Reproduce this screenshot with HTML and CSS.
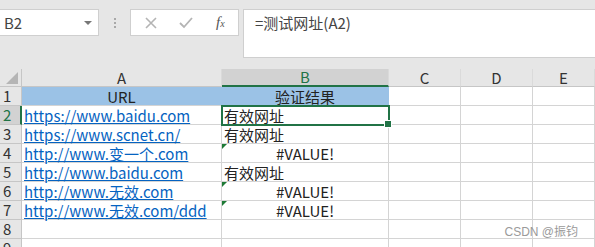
FILE: index.html
```html
<!DOCTYPE html>
<html lang="zh-CN">
<head>
  <meta charset="UTF-8" />
  <title>Excel - 验证结果</title>
  <link rel="stylesheet" href="styles.css">
</head>
<body>
  <div class="formula-bar">
    <div class="name-box">
      <span>B2</span>
      <span class="drop"></span>
    </div>
    <div class="grip">
      <i></i><i></i><i></i>
    </div>
    <div class="fx-buttons">
      <svg width="14" height="14" viewBox="0 0 14 14"><path d="M2 2 L12 12 M12 2 L2 12" stroke="#b4b4b4" stroke-width="1.6" fill="none"/></svg>
      <svg width="16" height="14" viewBox="0 0 16 14"><path d="M2 7 L6 11 L14 2" stroke="#b4b4b4" stroke-width="1.8" fill="none"/></svg>
      <span class="fx">f<sub>x</sub></span>
    </div>
    <div class="formula-input">=测试网址(A2)</div>
  </div>

  <div class="sheet">
    <div class="corner"><span class="corner-tri"></span></div>
    <div class="col-head">A</div>
    <div class="col-head active">B</div>
    <div class="col-head">C</div>
    <div class="col-head">D</div>
    <div class="col-head">E</div>

    <div class="row-head">1</div>
    <div class="cell fill center">URL</div>
    <div class="cell fill center">验证结果</div>
    <div class="cell"></div>
    <div class="cell"></div>
    <div class="cell"></div>

    <div class="row-head active">2</div>
    <div class="cell"><a href="#">https://www.baidu.com</a></div>
    <div class="cell selected">有效网址<span class="handle"></span></div>
    <div class="cell"></div>
    <div class="cell"></div>
    <div class="cell"></div>

    <div class="row-head">3</div>
    <div class="cell"><a href="#">https://www.scnet.cn/</a></div>
    <div class="cell">有效网址</div>
    <div class="cell"></div>
    <div class="cell"></div>
    <div class="cell"></div>

    <div class="row-head">4</div>
    <div class="cell"><a href="#">http://www.变一个.com</a></div>
    <div class="cell center err">#VALUE!</div>
    <div class="cell"></div>
    <div class="cell"></div>
    <div class="cell"></div>

    <div class="row-head">5</div>
    <div class="cell"><a href="#">http://www.baidu.com</a></div>
    <div class="cell">有效网址</div>
    <div class="cell"></div>
    <div class="cell"></div>
    <div class="cell"></div>

    <div class="row-head">6</div>
    <div class="cell"><a href="#">http://www.无效.com</a></div>
    <div class="cell center err">#VALUE!</div>
    <div class="cell"></div>
    <div class="cell"></div>
    <div class="cell"></div>

    <div class="row-head">7</div>
    <div class="cell"><a href="#">http://www.无效.com/ddd</a></div>
    <div class="cell center err">#VALUE!</div>
    <div class="cell"></div>
    <div class="cell"></div>
    <div class="cell"></div>

    <div class="row-head">8</div>
    <div class="cell"></div>
    <div class="cell"></div>
    <div class="cell"></div>
    <div class="cell"></div>
    <div class="cell"></div>

    <div class="row-head">9</div>
    <div class="cell"></div>
    <div class="cell"></div>
    <div class="cell"></div>
    <div class="cell"></div>
    <div class="cell"></div>
  </div>

  <div class="watermark">CSDN @振钧</div>
</body>
</html>
```

FILE: styles.css
```css
:root {
  --toolbar: #e6e6e6;
  --grid: #d4d4d4;
  --head-line: #c6c6c6;
  --green: #217346;
  --fill: #9bc2e6;
  --link: #0563c1;
  --text: #222;
}

* {
  box-sizing: border-box;
  margin: 0;
  padding: 0;
}

body {
  width: 595px;
  height: 247px;
  overflow: hidden;
  background: #fff;
  font-family: "Noto Sans CJK SC", "Noto Sans", sans-serif;
  color: var(--text);
  position: relative;
}

.formula-bar {
  background: var(--toolbar);
  height: 69px;
  padding-top: 9px;
  display: flex;
  align-items: flex-start;
}

.name-box {
  width: 99px;
  height: 27px;
  background: #fff;
  border: 1px solid #cfcfcf;
  border-left: none;
  display: flex;
  align-items: center;
  justify-content: space-between;
  padding: 0 6px 0 4px;
  font-size: 15px;
  color: #444;
}

.name-box .drop {
  width: 0;
  height: 0;
  border-left: 4px solid transparent;
  border-right: 4px solid transparent;
  border-top: 4px solid #777;
}

.grip {
  width: 31px;
  height: 27px;
  display: flex;
  flex-direction: column;
  align-items: center;
  justify-content: center;
  gap: 2px;
}

.grip i {
  width: 2px;
  height: 2px;
  background: #a8a8a8;
}

.fx-buttons {
  width: 109px;
  height: 27px;
  background: #fff;
  border: 1px solid #cfcfcf;
  display: flex;
  align-items: center;
  padding-left: 13px;
  gap: 20px;
}

.fx {
  font-family: "Liberation Serif", serif;
  font-style: italic;
  font-size: 15px;
  color: #555;
  margin-left: 2px;
}

.fx sub {
  font-size: 10px;
  vertical-align: 0;
}

.formula-input {
  flex: 1;
  margin-left: 4px;
  height: 49px;
  background: #fff;
  border: 1px solid #cfcfcf;
  border-right: none;
  padding: 2px 0 0 11px;
  font-size: 15px;
  color: #444;
}

.sheet {
  display: grid;
  grid-template-columns: 22px 200px 167px 72px 72px 62px;
  grid-template-rows: 18px repeat(9, 19px);
}

.corner,
.col-head,
.row-head {
  background: var(--toolbar);
  border-right: 1px solid var(--head-line);
  border-bottom: 1px solid var(--head-line);
  font-size: 14px;
  color: #333;
}

.corner {
  position: relative;
}

.corner-tri {
  position: absolute;
  right: 3px;
  bottom: 2px;
  width: 0;
  height: 0;
  border-left: 12px solid transparent;
  border-bottom: 12px solid #b5b5b5;
}

.col-head {
  display: flex;
  align-items: flex-end;
  justify-content: center;
  line-height: 17px;
  font-size: 15px;
  border-right-color: #dadada;
}

.col-head.active {
  background: #d2d2d2;
  color: var(--green);
  border-bottom: 2px solid var(--green);
}

.row-head {
  display: flex;
  align-items: flex-end;
  padding-left: 3px;
  line-height: 19px;
  font-size: 15px;
}

.row-head.active {
  background: #d2d2d2;
  color: var(--green);
  border-right: 2px solid var(--green);
}

.cell {
  border-right: 1px solid var(--grid);
  border-bottom: 1px solid var(--grid);
  font-size: 15px;
  line-height: 19px;
  padding-left: 2px;
  white-space: nowrap;
  overflow: visible;
  position: relative;
}

.cell a {
  color: var(--link);
  text-decoration: underline;
}

.cell.center {
  text-align: center;
  padding-left: 0;
}

.cell.fill {
  background: var(--fill);
  border-right-color: var(--fill);
}

.err::before {
  content: "";
  position: absolute;
  left: 0;
  top: 0;
  border-top: 5px solid #1e7a36;
  border-right: 5px solid transparent;
}

.selected {
  outline: 2px solid var(--green);
  outline-offset: -1px;
  z-index: 2;
}

.handle {
  position: absolute;
  right: -4px;
  bottom: -4px;
  width: 6px;
  height: 6px;
  background: var(--green);
  border: 1px solid #fff;
  box-sizing: content-box;
}

.watermark {
  position: absolute;
  right: 17px;
  bottom: 8px;
  font-size: 12px;
  color: #9a9a9a;
  font-family: "Liberation Sans", "Noto Sans CJK SC", sans-serif;
}
```
